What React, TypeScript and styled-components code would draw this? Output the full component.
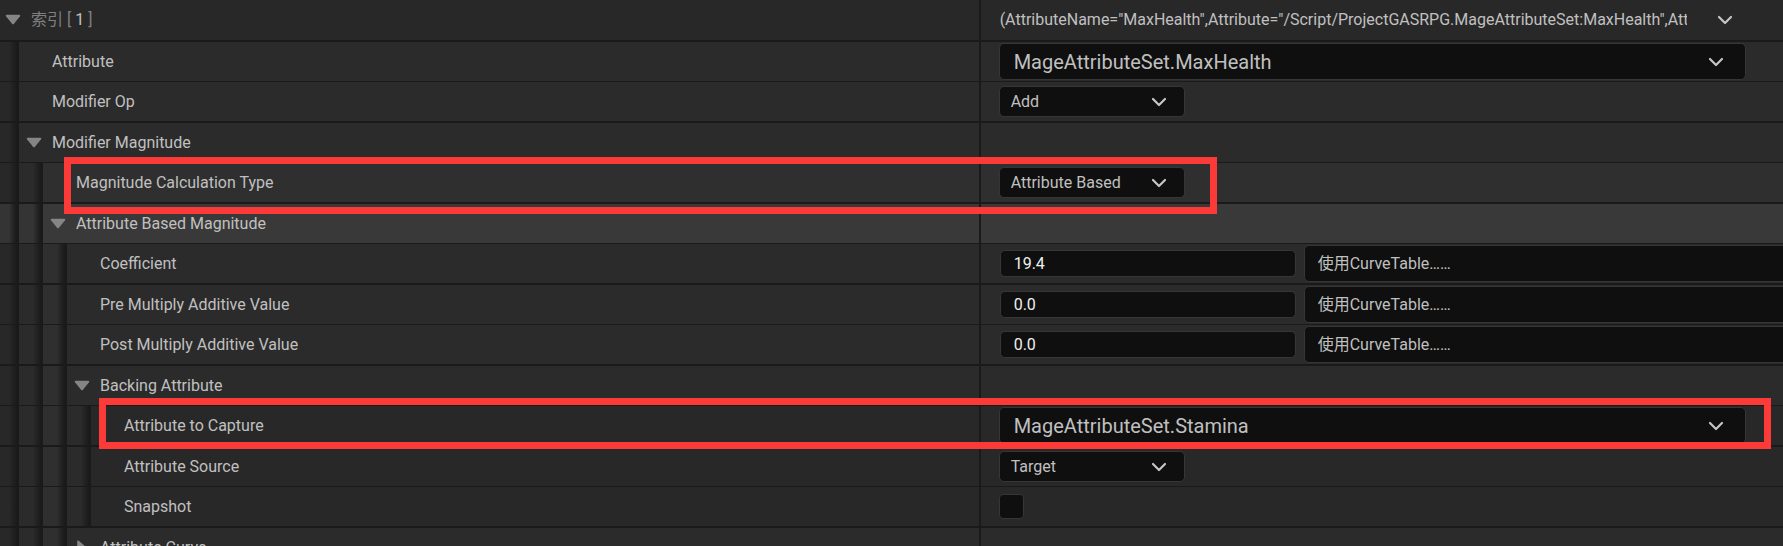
import React from "react";
import styled, { createGlobalStyle } from "styled-components";

const LINE = "#1a1a1a";
const SHADES = ["#282828", "#2b2b2b", "#2f2f2f", "#2b2b2b", "#282828"];
const HOVER = "#393939";
const HOVER_GUIDE = "#343434";
const TEXT = "#c0c0c0";
const FIELD = "#0f0f0f";
const FIELD_BORDER = "#363636";

const GlobalStyle = createGlobalStyle`
  * { box-sizing: border-box; }
  body {
    margin: 0;
    background: ${LINE};
    color: ${TEXT};
    font-family: Roboto, "Noto Sans CJK SC", sans-serif;
    font-size: 16px;
    line-height: 20px;
  }
  button, input, select { font: inherit; color: inherit; margin: 0; }
`;

const Panel = styled.main`
  height: 100vh;
  overflow: hidden;
`;

const Row = styled.div<{ $line: number; $first: boolean }>`
  position: relative;
  display: grid;
  grid-template-columns: 55% minmax(0, 1fr);
  height: ${(p) => (p.$first ? 40 : 39) + p.$line}px;
  border-bottom: ${(p) => p.$line}px solid ${LINE};
`;

const NameCell = styled.div`
  display: flex;
  min-width: 0;
  border-right: 2px solid ${LINE};
`;

const Guide = styled.span<{ $color: string; $first: boolean }>`
  flex: none;
  width: ${(p) => (p.$first ? 19 : 24)}px;
  background: linear-gradient(
    to left,
    ${LINE} 2px,
    #1e1e1e 4px,
    ${(p) => p.$color} 10px
  );
`;

const NameBody = styled.div<{ $color: string; $root: boolean }>`
  flex: 1;
  min-width: 0;
  display: flex;
  align-items: center;
  gap: 10px;
  padding-left: ${(p) => (p.$root ? 5 : 7)}px;
  background: ${(p) => p.$color};
`;

const ExpanderSlot = styled.span`
  flex: none;
  display: flex;
  width: 16px;
`;

const ExpanderButton = styled.button`
  display: flex;
  padding: 0;
  border: 0;
  background: none;
`;

const Name = styled.label`
  display: flex;
  gap: 4px;
  white-space: nowrap;
`;

const Dim = styled.span`
  color: #808080;
`;

const ValueCell = styled.div<{ $color: string }>`
  display: flex;
  align-items: center;
  gap: 8px;
  min-width: 0;
  overflow: hidden;
  padding-left: 18px;
  background: ${(p) => p.$color};
`;

const SelectBox = styled.span<{ $large?: boolean }>`
  display: grid;
  align-items: center;
  justify-items: end;
  ${(p) => (p.$large ? "flex: 1; margin-right: 37px;" : "flex: none; width: 186px;")}

  > * { grid-area: 1 / 1; }
  > svg {
    margin-right: ${(p) => (p.$large ? 22 : 18)}px;
    pointer-events: none;
  }
`;

const Select = styled.select<{ $large?: boolean }>`
  appearance: none;
  width: 100%;
  height: ${(p) => (p.$large ? 37 : 31)}px;
  padding: 0 ${(p) => (p.$large ? 14 : 11)}px;
  border: 1px solid ${FIELD_BORDER};
  border-radius: 5px;
  background: ${FIELD};
  font-size: ${(p) => (p.$large ? 20 : 16)}px;
  line-height: ${(p) => (p.$large ? 28 : 20)}px;
`;

const NumberInput = styled.input`
  flex: none;
  width: 296px;
  height: 27px;
  margin-left: 1px;
  padding: 0 13px;
  border: 1px solid ${FIELD_BORDER};
  border-radius: 5px;
  background: ${FIELD};
  color: #f0f0f0;
`;

const CurveButton = styled.button`
  flex: none;
  width: 520px;
  height: 37px;
  padding: 0 13px;
  border: 1px solid ${FIELD_BORDER};
  border-radius: 5px;
  background: ${FIELD};
  text-align: left;
`;

const Checkbox = styled.input`
  appearance: none;
  width: 25px;
  height: 25px;
  border: 1px solid ${FIELD_BORDER};
  border-radius: 4px;
  background: ${FIELD};
`;

const Summary = styled.span`
  flex: 1;
  min-width: 0;
  padding-left: 1px;
  overflow: hidden;
  white-space: nowrap;
`;

const MenuButton = styled.button`
  flex: none;
  display: flex;
  justify-content: center;
  width: 60px;
  margin-right: 28px;
  padding: 0;
  border: 0;
  background: none;
`;

const Highlight = styled.div<{ $wide?: boolean }>`
  position: absolute;
  z-index: 1;
  border: 7px solid #fc3a38;
  pointer-events: none;
  ${(p) =>
    p.$wide
      ? "top: -8px; bottom: -4px; left: 99px; right: 12px;"
      : "top: -6px; bottom: -12px; left: 64px; right: calc(45% - 236px);"}
`;

const Chevron = () => (
  <svg width="16" height="10" viewBox="0 0 16 10" fill="none" aria-hidden="true">
    <path d="M2 2 L8 8 L14 2" stroke="#c6c6c6" strokeWidth="2.2" strokeLinecap="round" strokeLinejoin="round" />
  </svg>
);

const Triangle = ({ open }: { open: boolean }) =>
  open ? (
    <svg width="16" height="12" viewBox="0 0 16 12" aria-hidden="true">
      <path d="M1.6 0.7H14.4Q16 0.9 15 2.3L9 9.7Q8 10.8 7 9.7L1 2.3Q0 0.9 1.6 0.7Z" fill="#858585" />
    </svg>
  ) : (
    <svg width="16" height="18" viewBox="0 0 16 18" aria-hidden="true">
      <path d="M3.2 2.4V15.6Q3.4 17.2 4.8 16.2L11.8 10.2Q12.9 9 11.8 7.8L4.8 1.8Q3.4 0.8 3.2 2.4Z" fill="#858585" />
    </svg>
  );

type Value =
  | { kind: "none" }
  | { kind: "summary"; text: string }
  | { kind: "select"; value: string; large?: boolean }
  | { kind: "number"; value: string }
  | { kind: "check" };

interface Property {
  id: string;
  name: React.ReactNode;
  depth: number;
  open?: boolean;
  hovered?: boolean;
  highlight?: "narrow" | "wide";
  value: Value;
}

const properties: Property[] = [
  {
    id: "index",
    name: (
      <>
        <Dim>索引</Dim>
        <Dim>[</Dim>
        <span>1</span>
        <Dim>]</Dim>
      </>
    ),
    depth: 0,
    open: true,
    value: {
      kind: "summary",
      text: '(AttributeName="MaxHealth",Attribute="/Script/ProjectGASRPG.MageAttributeSet:MaxHealth",Att',
    },
  },
  { id: "attribute", name: "Attribute", depth: 1, value: { kind: "select", value: "MageAttributeSet.MaxHealth", large: true } },
  { id: "op", name: "Modifier Op", depth: 1, value: { kind: "select", value: "Add" } },
  { id: "magnitude", name: "Modifier Magnitude", depth: 1, open: true, value: { kind: "none" } },
  { id: "type", name: "Magnitude Calculation Type", depth: 2, highlight: "narrow", value: { kind: "select", value: "Attribute Based" } },
  { id: "based", name: "Attribute Based Magnitude", depth: 2, open: true, hovered: true, value: { kind: "none" } },
  { id: "coefficient", name: "Coefficient", depth: 3, value: { kind: "number", value: "19.4" } },
  { id: "pre", name: "Pre Multiply Additive Value", depth: 3, value: { kind: "number", value: "0.0" } },
  { id: "post", name: "Post Multiply Additive Value", depth: 3, value: { kind: "number", value: "0.0" } },
  { id: "backing", name: "Backing Attribute", depth: 3, open: true, value: { kind: "none" } },
  { id: "capture", name: "Attribute to Capture", depth: 4, highlight: "wide", value: { kind: "select", value: "MageAttributeSet.Stamina", large: true } },
  { id: "source", name: "Attribute Source", depth: 4, value: { kind: "select", value: "Target" } },
  { id: "snapshot", name: "Snapshot", depth: 4, value: { kind: "check" } },
  { id: "curve", name: "Attribute Curve", depth: 3, open: false, value: { kind: "none" } },
];

const ValueEditor = ({ id, value }: { id: string; value: Value }) => {
  switch (value.kind) {
    case "summary":
      return (
        <>
          <Summary>{value.text}</Summary>
          <MenuButton id={id} aria-label="Element options">
            <Chevron />
          </MenuButton>
        </>
      );
    case "select":
      return (
        <SelectBox $large={value.large}>
          <Select id={id} $large={value.large} defaultValue={value.value}>
            <option>{value.value}</option>
          </Select>
          <Chevron />
        </SelectBox>
      );
    case "number":
      return (
        <>
          <NumberInput id={id} type="text" inputMode="decimal" defaultValue={value.value} />
          <CurveButton>使用CurveTable……</CurveButton>
        </>
      );
    case "check":
      return <Checkbox id={id} type="checkbox" />;
    default:
      return null;
  }
};

const PropertyRow = ({ property, index }: { property: Property; index: number }) => {
  const { id, name, depth, open, hovered, highlight, value } = property;
  const color = hovered ? HOVER : SHADES[depth];
  const editable = value.kind !== "none";
  return (
    <Row $line={index % 2 === 0 ? 2 : 1} $first={index === 0}>
      <NameCell>
        {SHADES.slice(0, depth).map((shade, level) => (
          <Guide key={level} $first={level === 0} $color={hovered ? HOVER_GUIDE : shade} />
        ))}
        <NameBody $color={color} $root={depth === 0}>
          <ExpanderSlot>
            {open !== undefined && (
              <ExpanderButton id={editable ? undefined : id} aria-label="Toggle group" aria-expanded={open}>
                <Triangle open={open} />
              </ExpanderButton>
            )}
          </ExpanderSlot>
          <Name htmlFor={id}>{name}</Name>
        </NameBody>
      </NameCell>
      <ValueCell $color={color}>
        <ValueEditor id={id} value={value} />
      </ValueCell>
      {highlight && <Highlight $wide={highlight === "wide"} />}
    </Row>
  );
};

export default function App() {
  return (
    <>
      <GlobalStyle />
      <Panel>
        {properties.map((property, index) => (
          <PropertyRow key={property.id} property={property} index={index} />
        ))}
      </Panel>
    </>
  );
}
